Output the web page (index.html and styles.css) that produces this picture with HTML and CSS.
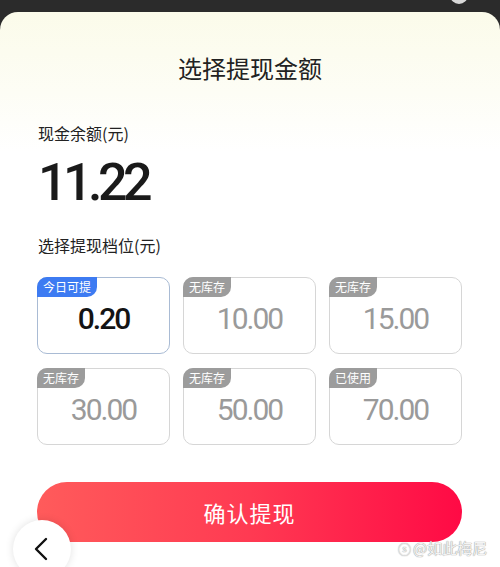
FILE: index.html
```html
<!DOCTYPE html>
<html lang="zh">
<head>
<meta charset="utf-8">
<link rel="stylesheet" href="styles.css">
</head>
<body>
<div class="top-dot"></div>
<div class="sheet">
  <h1 class="title">选择提现金额</h1>
  <div class="label">现金余额(元)</div>
  <div class="amount">11.22</div>
  <div class="label label-tier">选择提现档位(元)</div>
  <div class="grid">
    <div class="card card-active"><span class="badge badge-blue">今日可提</span><span class="num">0.20</span></div>
    <div class="card"><span class="badge">无库存</span><span class="num">10.00</span></div>
    <div class="card"><span class="badge">无库存</span><span class="num">15.00</span></div>
    <div class="card"><span class="badge">无库存</span><span class="num">30.00</span></div>
    <div class="card"><span class="badge">无库存</span><span class="num">50.00</span></div>
    <div class="card"><span class="badge">已使用</span><span class="num">70.00</span></div>
  </div>
  <button class="confirm">确认提现</button>
</div>
<div class="back">
  <svg width="16" height="24" viewBox="0 0 16 24"><path d="M13 2 L3 12 L13 22" fill="none" stroke="#111" stroke-width="2.4" stroke-linecap="round" stroke-linejoin="round"/></svg>
</div>
<div class="watermark"><span class="wm-icon">ⓢ</span>@如此梅尼</div>
</body>
</html>
```
FILE: styles.css
```css
html, body {
  margin: 0;
  padding: 0;
  height: 567px;
  overflow: hidden;
}
body {
  background: #2b2b2b;
  font-family: "Noto Sans CJK SC", "Noto Sans", sans-serif;
  position: relative;
}
.top-dot {
  position: absolute;
  left: 450px;
  top: -14px;
  width: 18px;
  height: 18px;
  border-radius: 50%;
  background: #d8d8d8;
}
.sheet {
  margin-top: 12px;
  height: 555px;
  box-sizing: border-box;
  border-radius: 18px 18px 0 0;
  background: linear-gradient(to bottom, #fbfbea 0px, #fdfdf5 80px, #ffffff 140px);
  padding: 40px 38px 0 38px;
}
.title {
  margin: 0;
  text-align: center;
  font-size: 24px;
  font-weight: 400;
  line-height: 32px;
  color: #222;
}
.label {
  margin-top: 38px;
  font-size: 16px;
  line-height: 22px;
  color: #222;
}
.amount {
  margin-top: 9px;
  font-family: Roboto, "Liberation Sans", sans-serif;
  font-size: 52px;
  font-weight: 500;
  letter-spacing: -4.5px;
  line-height: 60px;
  color: #1a1a1a;
}
.label-tier {
  margin-top: 21px;
}
.grid {
  margin-top: 21px;
  display: grid;
  grid-template-columns: repeat(3, 133px);
  column-gap: 13px;
  row-gap: 14px;
  margin-left: -1px;
}
.card {
  position: relative;
  height: 77px;
  box-sizing: border-box;
  border: 1px solid #d6d6d6;
  border-radius: 10px;
  background: #fff;
  display: flex;
  align-items: center;
  justify-content: center;
  padding-top: 6px;
}
.card-active {
  border-color: #a9bbd4;
}
.badge {
  position: absolute;
  left: -1px;
  top: -1px;
  height: 20px;
  padding: 0 6px;
  line-height: 20px;
  font-size: 12px;
  color: #fff;
  background: #9c9c9c;
  border-radius: 10px 0 10px 0;
}
.badge-blue {
  background: #3d7bf2;
}
.num {
  font-family: Roboto, "Liberation Sans", sans-serif;
  font-size: 30px;
  font-weight: 400;
  letter-spacing: -2px;
  color: #9a9a9a;
}
.card-active .num {
  color: #141414;
  font-weight: 500;
}
.confirm {
  display: block;
  margin-top: 37px;
  margin-left: -1px;
  width: 425px;
  height: 60px;
  border: none;
  border-radius: 30px;
  background: linear-gradient(to right, #ff5b5b 0%, #ff3a52 50%, #ff0a45 100%);
  color: #fff;
  font-family: "Noto Sans CJK SC", "Noto Sans", sans-serif;
  font-size: 22px;
  letter-spacing: 1px;
}
.back {
  position: absolute;
  left: 13px;
  top: 520px;
  width: 58px;
  height: 58px;
  border-radius: 50%;
  background: #fff;
  box-shadow: 0 0 8px rgba(0,0,0,0.12);
  display: flex;
  align-items: center;
  justify-content: center;
  box-sizing: border-box;
}
.back svg {
  margin-left: -3px;
}
.watermark {
  position: absolute;
  left: 398px;
  top: 538px;
  font-size: 15px;
  line-height: 20px;
  color: #f4f4f4;
  text-shadow: 0 0 1px #999, 0 0 1px #999;
}
.wm-icon {
  font-size: 13px;
  margin-right: 2px;
}
```
